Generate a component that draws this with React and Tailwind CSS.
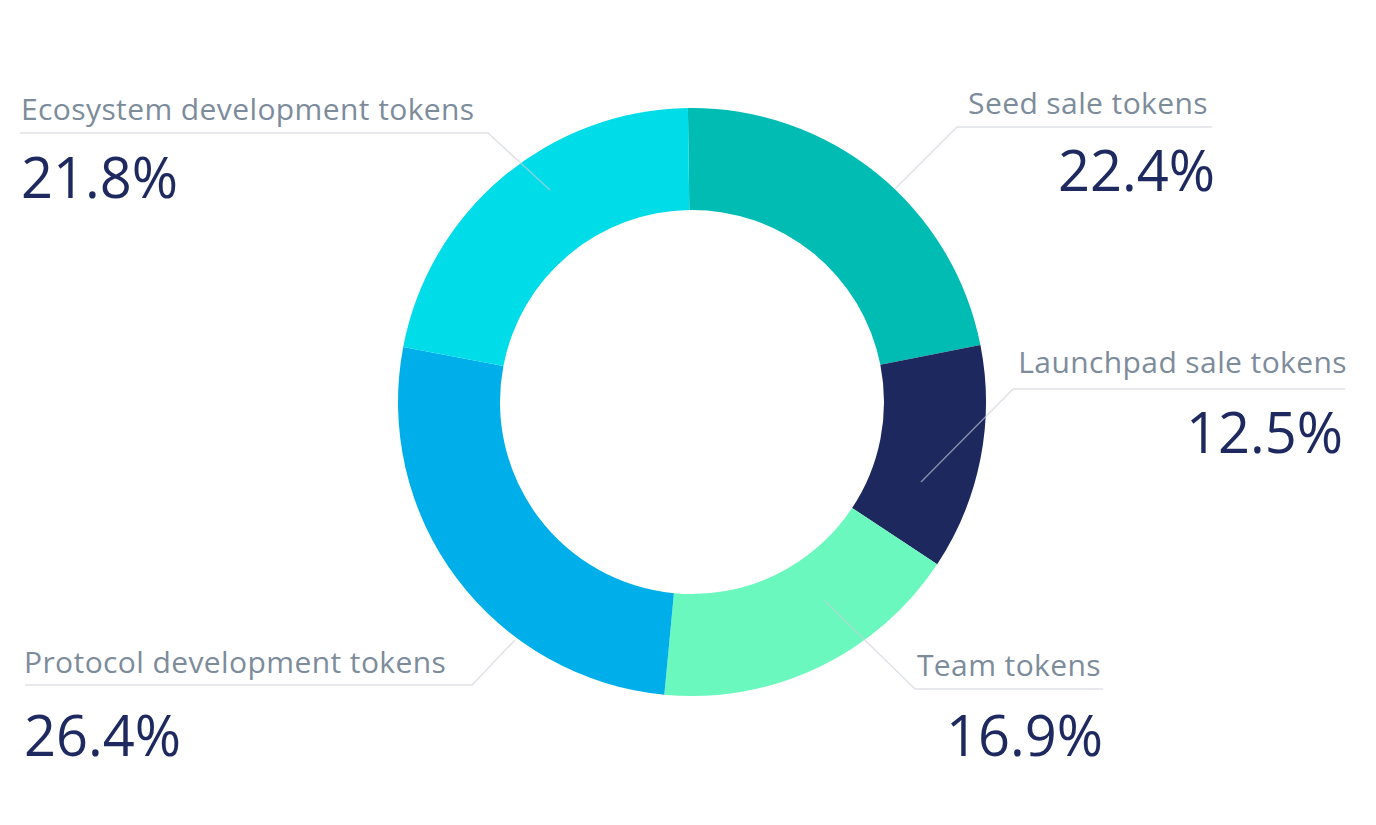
import React from 'react';

const CX = 692;
const CY = 402;
const R_OUT = 294;
const R_IN = 192;

// angles (deg, clockwise from 12 o'clock) measured off the chart
const segments = [
    { name: 'Seed sale tokens', value: 22.4, color: '#00bcb3', from: -0.8, to: 78.8 },
    { name: 'Launchpad sale tokens', value: 12.5, color: '#1d285e', from: 78.8, to: 123.5 },
    { name: 'Team tokens', value: 16.9, color: '#6bf8bf', from: 123.5, to: 185.4 },
    { name: 'Protocol development tokens', value: 26.4, color: '#00afe9', from: 185.4, to: 280.8 },
    { name: 'Ecosystem development tokens', value: 21.8, color: '#00dce8', from: 280.8, to: 359.2 },
];

// leader lines: underline + diagonal into the ring
const leaders = [
    '20,133 488,133 550,190',
    '1212,127 957,127 895,189',
    '1345,389 1013,389 921,482',
    '1103,689 915,689 825,601',
    '25,685 472,685 515,640',
];

const point = (r, deg) => {
    const a = (deg * Math.PI) / 180;
    return [CX + r * Math.sin(a), CY - r * Math.cos(a)];
};

const arcPath = (start, end) => {
    const large = end - start > 180 ? 1 : 0;
    const [x1, y1] = point(R_OUT, start);
    const [x2, y2] = point(R_OUT, end);
    const [x3, y3] = point(R_IN, end);
    const [x4, y4] = point(R_IN, start);
    return `M${x1},${y1} A${R_OUT},${R_OUT} 0 ${large} 1 ${x2},${y2} L${x3},${y3} A${R_IN},${R_IN} 0 ${large} 0 ${x4},${y4} Z`;
};

const Donut = () => (
    <svg className="absolute inset-0" width="1376" height="825" viewBox="0 0 1376 825">
        {segments.map((s) => (
            <path key={s.name} d={arcPath(s.from, s.to)} fill={s.color} />
        ))}
        {leaders.map((pts) => (
            <polyline key={pts} points={pts} fill="none" stroke="#c9ced6" strokeOpacity="0.6" strokeWidth="1.5" />
        ))}
    </svg>
);

const Label = ({ title, value, gap, align = 'left', titleShift = '', valueShift = '', className = '' }) => (
    <div className={`${align === 'right' ? 'text-right self-end' : 'text-left self-start'} ${className}`}>
        <div className={`h-[34px] leading-[34px] text-[30px] tracking-[0.4px] text-[#7d8c9b] whitespace-nowrap ${titleShift}`}>
            {title}
        </div>
        <div className={`${gap} h-[56px] leading-[56px] text-[56px] text-[#1e2a5f] whitespace-nowrap ${valueShift}`}>{value}</div>
    </div>
);

export default function App() {
    return (
        <div className="relative w-[1376px] h-[825px] bg-white overflow-hidden" style={{ fontFamily: '"Open Sans", "Noto Sans", sans-serif' }}>
            <Donut />
            <div className="relative flex justify-between h-full">
                {/* left labels */}
                <div className="flex flex-col pt-[92px] pl-[21px]">
                    <Label title="Ecosystem development tokens" value="21.8%" gap="mt-[22px]" />
                    <Label
                        title="Protocol development tokens"
                        value="26.4%"
                        gap="mt-[27px]"
                        className="mt-[441px] ml-[3px]"
                    />
                </div>

                {/* right labels */}
                <div className="flex flex-col pt-[86px]">
                    <Label
                        title="Seed sale tokens"
                        value="22.4%"
                        gap="mt-[21px]"
                        align="right"
                        titleShift="mr-[7px]"
                        className="mr-[161px]"
                    />
                    <Label
                        title="Launchpad sale tokens"
                        value="12.5%"
                        gap="mt-[24px]"
                        align="right"
                        valueShift="mr-[4px]"
                        className="mt-[148px] mr-[29px]"
                    />
                    <Label
                        title="Team tokens"
                        value="16.9%"
                        gap="mt-[24px]"
                        align="right"
                        titleShift="mr-[2px]"
                        className="mt-[189px] mr-[273px]"
                    />
                </div>
            </div>
        </div>
    );
}
